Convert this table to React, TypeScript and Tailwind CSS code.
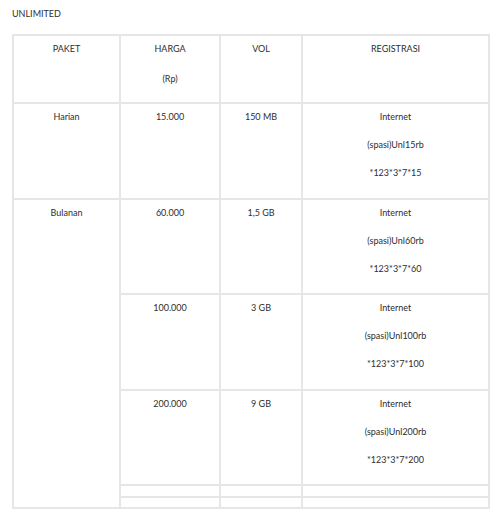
import React from "react";

type Row = {
  harga: string;
  vol: string;
  reg: string[];
  h: string;
};

const cell = "border-2 border-[#e6e6e6] p-0 align-top text-center";

function Lines({ items, gap = "gap-[14px]" }: { items: string[]; gap?: string }) {
  return (
    <div className={`flex flex-col items-center pt-[6px] ${gap}`}>
      {items.map((t, i) => (
        <span key={i} className="leading-[14px] whitespace-nowrap">
          {t}
        </span>
      ))}
    </div>
  );
}

const bulanan: Row[] = [
  { harga: "60.000", vol: "1,5 GB", reg: ["Internet", "(spasi)Unl60rb", "*123*3*7*60"], h: "h-[95px]" },
  { harga: "100.000", vol: "3 GB", reg: ["Internet", "(spasi)Unl100rb", "*123*3*7*100"], h: "h-[96px]" },
  { harga: "200.000", vol: "9 GB", reg: ["Internet", "(spasi)Unl200rb", "*123*3*7*200"], h: "h-[95px]" },
];

export default function App() {
  return (
    <div
      className="w-[500px] h-[521px] bg-white text-[#2e2e2e] text-[9px]"
      style={{ fontFamily: "Lato, 'Open Sans', sans-serif" }}
    >
      <div className="pl-[12px] pt-[7px] leading-[14px]">UNLIMITED</div>
      <table className="ml-[12px] mt-[13px] w-[476px] table-fixed border-collapse">
        <colgroup>
          <col className="w-[107px]" />
          <col className="w-[100px]" />
          <col className="w-[82px]" />
          <col className="w-[187px]" />
        </colgroup>
        <tbody>
          <tr className="h-[68px]">
            <td className={cell}>
              <Lines items={["PAKET"]} />
            </td>
            <td className={cell}>
              <Lines items={["HARGA", "(Rp)"]} gap="gap-[16px]" />
            </td>
            <td className={cell}>
              <Lines items={["VOL"]} />
            </td>
            <td className={cell}>
              <Lines items={["REGISTRASI"]} />
            </td>
          </tr>
          <tr className="h-[96px]">
            <td className={cell}>
              <Lines items={["Harian"]} />
            </td>
            <td className={cell}>
              <Lines items={["15.000"]} />
            </td>
            <td className={cell}>
              <Lines items={["150 MB"]} />
            </td>
            <td className={cell}>
              <Lines items={["Internet", "(spasi)Unl15rb", "*123*3*7*15"]} />
            </td>
          </tr>
          {bulanan.map((r, i) => (
            <tr key={r.harga} className={r.h}>
              {i === 0 && (
                <td rowSpan={5} className={cell}>
                  <Lines items={["Bulanan"]} />
                </td>
              )}
              <td className={cell}>
                <Lines items={[r.harga]} />
              </td>
              <td className={cell}>
                <Lines items={[r.vol]} />
              </td>
              <td className={cell}>
                <Lines items={r.reg} />
              </td>
            </tr>
          ))}
          <tr className="h-[12px]">
            <td className={cell} />
            <td className={cell} />
            <td className={cell} />
          </tr>
          <tr className="h-[11px]">
            <td className={cell} />
            <td className={cell} />
            <td className={cell} />
          </tr>
        </tbody>
      </table>
    </div>
  );
}
